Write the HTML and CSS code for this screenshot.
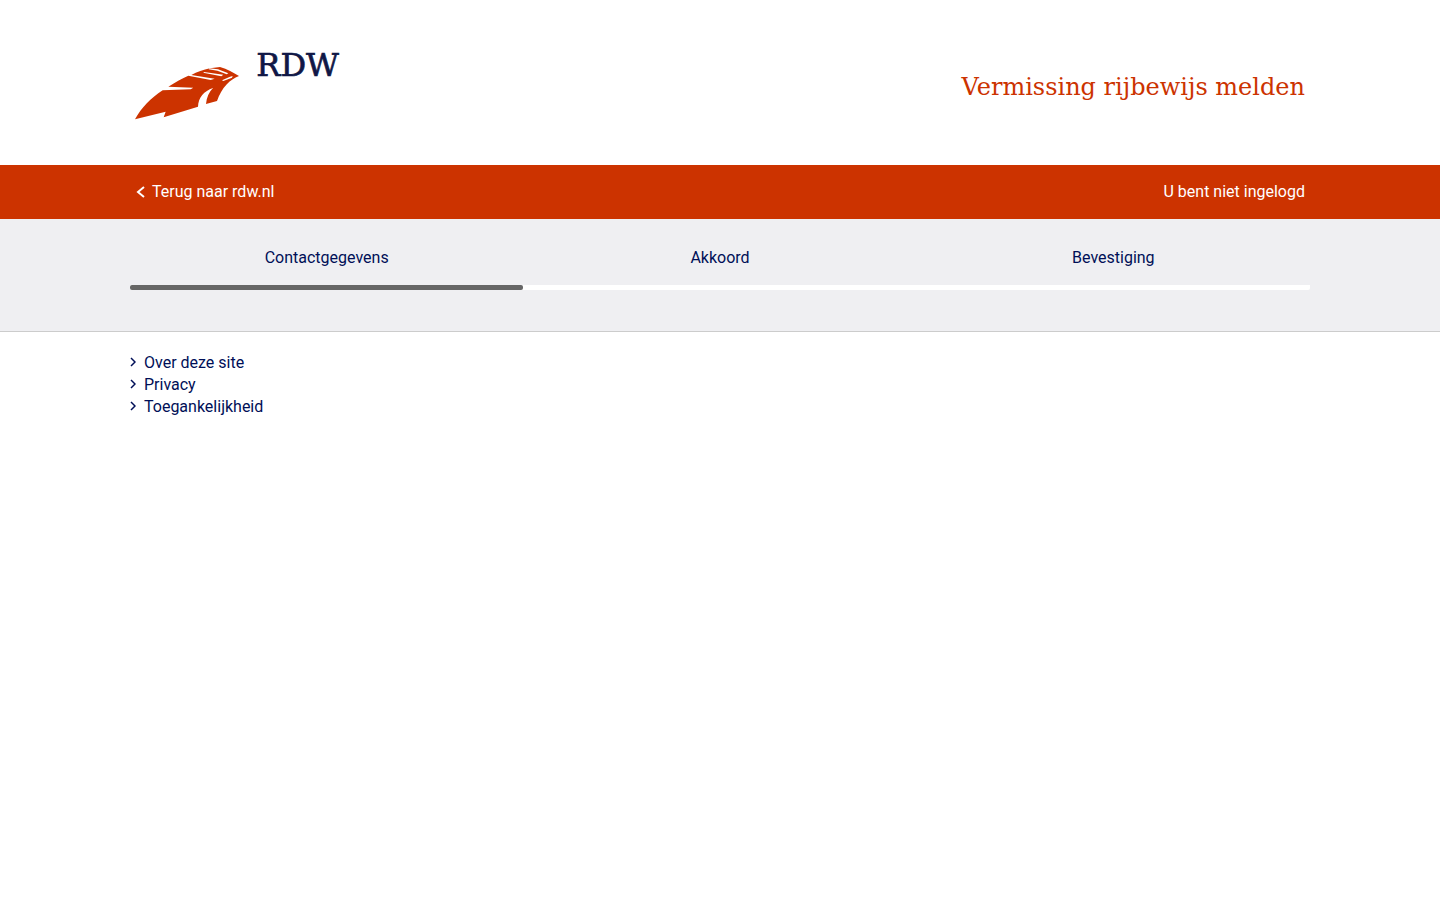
FILE: index.html
```html
<!DOCTYPE html>
<html lang="nl">
<head>
<meta charset="utf-8">
<meta name="viewport" content="width=device-width, initial-scale=1">
<title>Vermissing rijbewijs melden</title>
<link rel="stylesheet" href="styles.css">
</head>
<body>
<header class="header">
  <div class="container header-inner">
    <svg class="logo" viewBox="0 0 660 270" role="img" aria-label="RDW">
      <path class="logo-feather" d="M15 238C35 203 62 174 98 151L182 148L190 143L115 140C137 126 156 115 175 107L242 120L254 116L184 105C201 96 220 90 240 85L270 81C292 87 310 98 327 108C300 118 275 143 261 183L228 192C230 172 237 156 249 144C222 153 205 173 204 200L101 232L107 215Z"/>
      <path class="logo-gap" d="M222 96L280 104L274 109L220 98ZM238 85L264 88L295 100L290 103L262 92L236 88ZM276 121L300 110L308 108L306 113L280 123Z"/>
      <text class="logo-text" x="379" y="108">RDW</text>
    </svg>
    <h1 class="title">Vermissing rijbewijs melden</h1>
  </div>
</header>
<div class="topbar">
  <div class="container topbar-inner">
    <a class="back" href="#">
      <svg class="back-icon" viewBox="0 0 11 14" aria-hidden="true"><path d="M9 2L3 7L9 12"/></svg>
      Terug naar rdw.nl
    </a>
    <span>U bent niet ingelogd</span>
  </div>
</div>
<main class="progress">
  <ol class="container steps">
    <li class="step step-active">Contactgegevens</li>
    <li class="step">Akkoord</li>
    <li class="step">Bevestiging</li>
  </ol>
</main>
<footer class="container footer">
  <ul class="links">
    <li><a href="#"><svg class="chevron" viewBox="0 0 6 12" aria-hidden="true"><path d="M1 1L5 5L1 9"/></svg>Over deze site</a></li>
    <li><a href="#"><svg class="chevron" viewBox="0 0 6 12" aria-hidden="true"><path d="M1 1L5 5L1 9"/></svg>Privacy</a></li>
    <li><a href="#"><svg class="chevron" viewBox="0 0 6 12" aria-hidden="true"><path d="M1 1L5 5L1 9"/></svg>Toegankelijkheid</a></li>
  </ul>
</footer>
</body>
</html>
```

FILE: styles.css
```css
* { box-sizing: border-box; }
body {
  margin: 0;
  background: #fff;
  color: #000f57;
  font: 16px/22px Roboto, "Liberation Sans", sans-serif;
}
a { color: inherit; text-decoration: none; }
a:hover { text-decoration: underline; }
.container {
  width: 100%;
  max-width: 1180px;
  margin: 0 auto;
}
.header { padding: 40px 0 35px; }
.header-inner {
  display: flex;
  align-items: center;
  justify-content: space-between;
  padding-right: 5px;
}
.logo { width: 220px; height: 90px; }
.logo-feather { fill: #cc3300; }
.logo-gap { fill: #fff; }
.logo-text {
  fill: #101746;
  stroke: #101746;
  stroke-width: 2;
  font-family: "Roboto Slab", "DejaVu Serif", serif;
  font-size: 96px;
}
.title {
  margin: 0;
  padding-top: 4px;
  color: #cc3300;
  font: 400 24px/32px "Roboto Slab", "DejaVu Serif", serif;
}
.topbar { background: #cc3300; color: #fff; }
.topbar-inner {
  display: flex;
  justify-content: space-between;
  padding: 16px 5px;
}
.back { display: flex; align-items: center; gap: 6px; }
.back-icon { width: 11px; height: 14px; }
.back-icon path { fill: none; stroke: #fff; stroke-width: 2; }
.progress {
  padding: 28px 0 41px;
  background: #efeff2;
  border-bottom: 1px solid #ccc;
}
.steps {
  display: flex;
  padding: 0;
  list-style: none;
  background: linear-gradient(#fff, #fff) bottom / 100% 5px no-repeat;
  border-radius: 2px;
}
.step {
  flex: 1;
  display: flex;
  flex-direction: column;
  text-align: center;
}
.step::after {
  content: "";
  height: 5px;
  margin-top: 16px;
  border-radius: 2px;
}
.step-active::after { background: #666; }
.footer { padding: 20px 0; }
.links {
  margin: 0;
  padding: 0;
  list-style: none;
}
.links li { display: flex; }
.links a { display: flex; align-items: center; gap: 8px; }
.chevron { width: 6px; height: 12px; }
.chevron path { fill: none; stroke: #000f57; stroke-width: 1.5; }
```
